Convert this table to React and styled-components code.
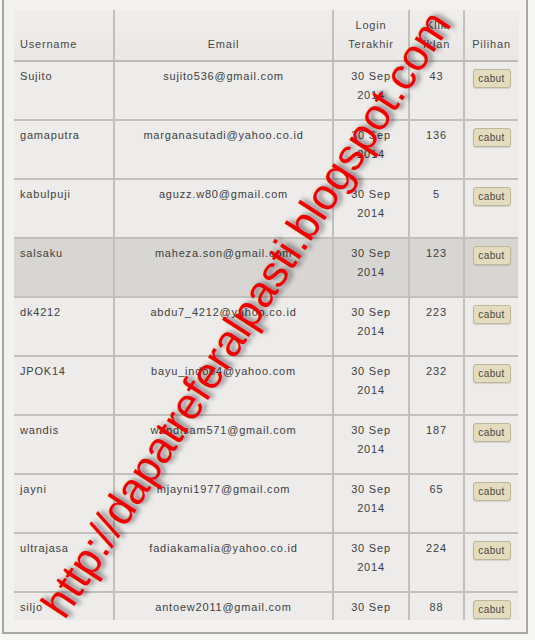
import styled, { createGlobalStyle } from "styled-components"

const Global = createGlobalStyle`
  html, body {
    margin: 0;
    padding: 0;
    background: #f6f6f5;
  }
`

const members = [
  { user: "Sujito", email: "sujito536@gmail.com", date: ["30 Sep", "2014"], clicks: 43 },
  { user: "gamaputra", email: "marganasutadi@yahoo.co.id", date: ["30 Sep", "2014"], clicks: 136 },
  { user: "kabulpuji", email: "aguzz.w80@gmail.com", date: ["30 Sep", "2014"], clicks: 5 },
  { user: "salsaku", email: "maheza.son@gmail.com", date: ["30 Sep", "2014"], clicks: 123, active: true },
  { user: "dk4212", email: "abdu7_4212@yahoo.co.id", date: ["30 Sep", "2014"], clicks: 223 },
  { user: "JPOK14", email: "bayu_indo04@yahoo.com", date: ["30 Sep", "2014"], clicks: 232 },
  { user: "wandis", email: "wandisam571@gmail.com", date: ["30 Sep", "2014"], clicks: 187 },
  { user: "jayni", email: "mjayni1977@gmail.com", date: ["30 Sep", "2014"], clicks: 65 },
  { user: "ultrajasa", email: "fadiakamalia@yahoo.co.id", date: ["30 Sep", "2014"], clicks: 224 },
  { user: "siljo", email: "antoew2011@gmail.com", date: ["30 Sep", "2014"], clicks: 88 },
]

const App = () => {
  return (
    <>
      <Global />
      <Frame>
        <Scroller>
          <Table>
            <colgroup>
              <col style={{ width: 100 }} />
              <col style={{ width: 219 }} />
              <col style={{ width: 76 }} />
              <col style={{ width: 55 }} />
              <col style={{ width: 54 }} />
            </colgroup>
            <thead>
              <tr>
                <Th $align="left">Username</Th>
                <Th>Email</Th>
                <Th>Login<br />Terakhir</Th>
                <Th>Klik<br />Iklan</Th>
                <Th $last>Pilihan</Th>
              </tr>
            </thead>
            <tbody>
              {members.map((m) => (
                <Row key={m.user} $active={m.active}>
                  <Td $align="left">{m.user}</Td>
                  <Td>{m.email}</Td>
                  <Td>{m.date[0]}<br />{m.date[1]}</Td>
                  <Td>{m.clicks}</Td>
                  <Td $last><Cabut>cabut</Cabut></Td>
                </Row>
              ))}
            </tbody>
          </Table>
        </Scroller>
        <Watermark>http://dapatreferalpasti.blogspot.com</Watermark>
      </Frame>
    </>
  )
}

export default App

const Frame = styled.div`
  position: relative;
  box-sizing: border-box;
  margin-left: 2px;
  width: 526px;
  height: 634px;
  padding: 10px 7px 12px 10px;
  background: #f3f2f0;
  border-left: 2px solid #a8a7a5;
  border-right: 2px solid #a8a7a5;
  border-bottom: 2px solid #a8a7a5;
  overflow: hidden;
`

const Scroller = styled.div`
  height: 610px;
  overflow: hidden;
  background: #ecebe9;
`

const Table = styled.table`
  width: 504px;
  table-layout: fixed;
  border-collapse: collapse;
  font-family: "Liberation Sans", Arial, sans-serif;
  font-size: 11px;
  letter-spacing: 0.8px;
  color: #404040;
`

const Th = styled.th`
  height: 51px;
  box-sizing: border-box;
  padding: 0 4px 6px ${(p) => (p.$align === "left" ? "6px" : "4px")};
  vertical-align: bottom;
  text-align: ${(p) => p.$align || "center"};
  font-weight: normal;
  line-height: 19px;
  color: #474747;
  background: linear-gradient(#efeeec, #e9e8e6);
  border-bottom: 2px solid #bcbab7;
  border-right: ${(p) => (p.$last ? "none" : "2px solid #c2c0bd")};
`

const Row = styled.tr`
  height: 59px;
  background: ${(p) => (p.$active ? "#d8d6d3" : "#edecea")};
`

const Td = styled.td`
  box-sizing: border-box;
  padding: 5px 4px 0 ${(p) => (p.$align === "left" ? "6px" : "4px")};
  vertical-align: top;
  text-align: ${(p) => p.$align || "center"};
  line-height: 19px;
  white-space: nowrap;
  border-bottom: 2px solid #c2c0bd;
  border-right: ${(p) => (p.$last ? "none" : "2px solid #c2c0bd")};
`

const Cabut = styled.button`
  margin-top: 2px;
  width: 38px;
  height: 19px;
  padding: 0;
  font-family: "Liberation Sans", Arial, sans-serif;
  font-size: 10px;
  letter-spacing: 0.4px;
  color: #4a4a40;
  background: #e3dcbf;
  border: 1px solid #bdb697;
  border-radius: 3px;
  box-shadow: 0 1px 1px rgba(0, 0, 0, 0.12);
`

const Watermark = styled.div`
  position: absolute;
  left: 242px;
  top: 314px;
  transform: translate(-50%, -50%) rotate(-57deg);
  white-space: nowrap;
  font-family: "Liberation Sans", Arial, sans-serif;
  font-size: 44px;
  line-height: 1;
  color: #f00000;
  text-shadow: 3px 3px 5px rgba(0, 0, 0, 0.5);
  pointer-events: none;
`
